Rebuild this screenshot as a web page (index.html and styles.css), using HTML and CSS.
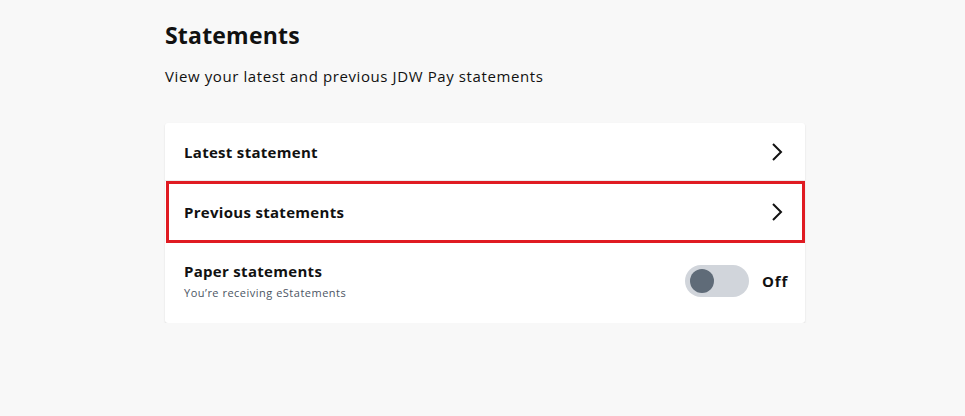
FILE: index.html
```html
<!DOCTYPE html>
<html lang="en">
<head>
<meta charset="utf-8">
<title>Statements</title>
<link rel="stylesheet" href="styles.css">
</head>
<body>
<main class="page">
  <h1 class="title">Statements</h1>
  <p class="intro">View your latest and previous JDW Pay statements</p>
  <div class="card">
    <a class="row" href="#">
      <span class="row-label">Latest statement</span>
      <svg class="chev" width="14" height="20" viewBox="0 0 14 20" aria-hidden="true"><path d="M3 2 L11 10 L3 18" fill="none" stroke="#111" stroke-width="2"/></svg>
    </a>
    <a class="row row-selected" href="#">
      <span class="row-label">Previous statements</span>
      <svg class="chev" width="14" height="20" viewBox="0 0 14 20" aria-hidden="true"><path d="M3 2 L11 10 L3 18" fill="none" stroke="#111" stroke-width="2"/></svg>
    </a>
    <div class="row row-paper">
      <div class="paper-text">
        <span class="row-label">Paper statements</span>
        <span class="row-sub">You’re receiving eStatements</span>
      </div>
      <div class="toggle-wrap">
        <span class="toggle"><span class="knob"></span></span>
        <span class="toggle-label">Off</span>
      </div>
    </div>
  </div>
</main>
</body>
</html>
```
FILE: styles.css
```css
html, body {
  margin: 0;
  padding: 0;
  background: #f8f8f8;
}
body {
  font-family: "Open Sans", "Liberation Sans", sans-serif;
  color: #111;
}
.page {
  width: 640px;
  margin-left: 165px;
  padding-top: 19px;
}
.title {
  margin: 0;
  font-size: 23px;
  font-weight: 700;
  line-height: 32px;
  letter-spacing: 0.2px;
}
.intro {
  margin: 14px 0 0;
  font-size: 15px;
  line-height: 22px;
  letter-spacing: 0.6px;
}
.card {
  margin-top: 36px;
  background: #fff;
  border-radius: 3px;
  box-shadow: 0 1px 2px rgba(0,0,0,0.12);
}
.row {
  display: flex;
  align-items: center;
  justify-content: space-between;
  padding: 0 21px 0 19px;
  height: 58px;
  color: #111;
  text-decoration: none;
  border-bottom: 1px solid #ececec;
  box-sizing: border-box;
}
.row-selected {
  height: 62px;
  border: 3px solid #e01b22;
  margin-left: 1px;
  padding-left: 15px;
  padding-right: 18px;
}
.row-label {
  font-size: 15px;
  font-weight: 700;
  line-height: 20px;
  letter-spacing: 0.3px;
}
.row-paper {
  height: 80px;
  border-bottom: none;
  padding-bottom: 4px;
}
.paper-text {
  display: flex;
  flex-direction: column;
  gap: 4px;
}
.row-sub {
  font-size: 11px;
  line-height: 16px;
  color: #4b5563;
  letter-spacing: 0.5px;
}
.toggle-wrap {
  display: flex;
  align-items: center;
  gap: 13px;
  margin-right: -4px;
}
.toggle {
  display: flex;
  align-items: center;
  width: 64px;
  height: 32px;
  border-radius: 16px;
  background: #d1d5db;
  padding: 0 5px;
  box-sizing: border-box;
}
.knob {
  width: 24px;
  height: 24px;
  border-radius: 50%;
  background: #5f6b78;
}
.toggle-label {
  font-size: 15px;
  font-weight: 700;
  letter-spacing: 0.8px;
}
.chev {
  display: block;
}
```
